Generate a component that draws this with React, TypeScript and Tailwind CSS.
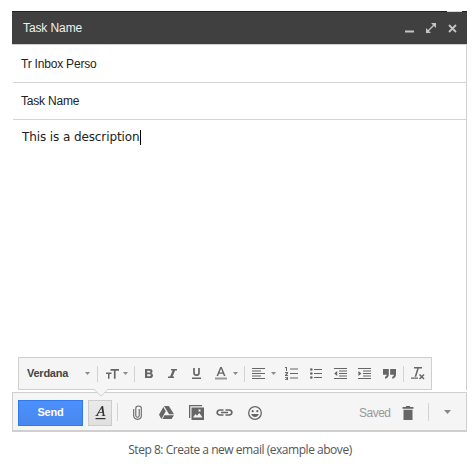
import type { ReactNode } from 'react';

type IconProps = { w: number; h: number; className?: string; label?: string; children: ReactNode };

function Icon({ w, h, className = '', label, children }: IconProps) {
  return (
    <svg width={w} height={h} viewBox={`0 0 ${w} ${h}`} className={`block shrink-0 ${className}`} fill="currentColor" aria-label={label}>
      {children}
    </svg>
  );
}

function Caret({ className = '' }: { className?: string }) {
  return (
    <Icon w={5} h={3} className={`text-[#8a8a8a] ${className}`}>
      <path d="M0 0h5L2.5 3z" />
    </Icon>
  );
}

function Divider({ className = '' }: { className?: string }) {
  return <div className={`w-px shrink-0 bg-[#d3d3d3] ${className}`} />;
}

function TitleBar() {
  return (
    <header className="relative flex h-[33px] items-center border-t border-[#202020] bg-[#404040] pl-[10px] text-[#c4c4c4]">
      <div className="absolute right-[5px] top-[-1px] h-px w-[15px] bg-[#d8d8d8]" />
      <h1 className="w-[372px] pl-px text-[12px] tracking-[-0.1px] text-[#f0f0f0]">Task Name</h1>
      <Icon w={9} h={9} className="ml-[11px]" label="Minimize">
        <path d="M0 6.500h9v2H0z" />
      </Icon>
      <Icon w={10} h={10} className="ml-3" label="Full screen">
        <path d="M5 0h5v5zM0 5l5 5H0z" />
        <path d="M2 8l6-6" fill="none" stroke="currentColor" strokeWidth="1.300" />
      </Icon>
      <Icon w={9} h={9} className="ml-[12px]" label="Close">
        <path d="M1 1l7 7M8 1L1 8" fill="none" stroke="currentColor" strokeWidth="1.8" />
      </Icon>
    </header>
  );
}

function FormatToolbar() {
  return (
    <div className="ml-[6px] flex h-[33px] w-[414px] items-center border border-[#cfcfcf] bg-[#f5f5f5] pl-2 text-[#666]">
      <span className="w-[58px] shrink-0 text-[11px] font-bold leading-none tracking-[-0.25px] text-[#444]">Verdana</span>
      <Caret />
      <Divider className="ml-[7px] h-4" />
      <Icon w={13} h={11} className="ml-2" label="Size">
        <path d="M4.5 1H13v1.700H9.600v8H7.900V2.700H4.500zM0 4.500h5.500V6H3.500v4.700H2V6H0z" />
      </Icon>
      <Caret className="ml-1" />
      <Divider className="ml-[6px] h-4" />
      <Icon w={8} h={9} className="ml-[10px]" label="Bold">
        <path fillRule="evenodd" d="M0 0h4.5C6.500 0 7.500 .9 7.500 2.300c0 .9-.5 1.600-1.200 1.900C7.300 4.500 8 5.300 8 6.400 8 8 6.800 9 4.800 9H0zM2.200 1.700v1.900h1.900c.8 0 1.200-.3 1.200-.9s-.4-1-1.200-1zM2.200 5.200v2.100h2.200c.8 0 1.300-.4 1.300-1.100s-.5-1-1.300-1z" />
      </Icon>
      <Icon w={9} h={9} className="ml-[15px]" label="Italic">
        <path d="M3 0h6v1.500H7.100L4.600 7.500H6V9H0V7.500h2.100l2.500-6H3z" />
      </Icon>
      <Icon w={9} h={11} className="ml-[15px]" label="Underline">
        <path d="M2 0v4.800c0 1.600.8 2.400 2.500 2.400S7 6.400 7 4.800V0" fill="none" stroke="currentColor" strokeWidth="1.7" />
        <path d="M0 9.500h9V11H0z" />
      </Icon>
      <Icon w={12} h={13} className="ml-[14px]" label="Text color">
        <path fillRule="evenodd" d="M5.200 0h1.600L10.500 9H8.900L8 6.700H4L3.100 9H1.500zM6 1.700L4.500 5.400h3z" />
        <path d="M0 10.500h12v2H0z" fill="#999" />
      </Icon>
      <Caret className="ml-[6px]" />
      <Divider className="ml-[6px] h-4" />
      <Icon w={13} h={11} className="ml-[7px]" label="Align">
        <path d="M0 0h13v1H0zM0 2.500h9v1H0zM0 5h13v1H0zM0 7.500h9v1H0zM0 10h13v1H0z" />
      </Icon>
      <Caret className="ml-[6px]" />
      <Icon w={13} h={13} className="ml-[9px]" label="Numbered list">
        <path d="M5 1.500h8v1H5zM5 6h8v1H5zM5 10.500h8v1H5zM0 0h2v4H1V1H0zM0 5h3v1.500L1.500 8H3v1H0V8l1.700-2H0zM0 10h3v3H0v-.8h2v-.4H1v-.7h1v-.3H0z" />
      </Icon>
      <Icon w={12} h={11} className="ml-3" label="Bulleted list">
        <path d="M4 1h8v1H4zM4 5h8v1H4zM4 9h8v1H4z" />
        <circle cx="1.300" cy="1.500" r="1.300" /><circle cx="1.300" cy="5.500" r="1.300" /><circle cx="1.300" cy="9.500" r="1.300" />
      </Icon>
      <Icon w={13} h={11} className="ml-3" label="Indent less">
        <path d="M0 0h13v1H0zM5 2.500h8v1H5zM5 5h8v1H5zM5 7.500h8v1H5zM0 10h13v1H0zM3.200 3v5L.2 5.500z" />
      </Icon>
      <Icon w={13} h={11} className="ml-[11px]" label="Indent more">
        <path d="M0 0h13v1H0zM5 2.500h8v1H5zM5 5h8v1H5zM5 7.500h8v1H5zM0 10h13v1H0zM.4 3v5l3-2.500z" />
      </Icon>
      <Icon w={13} h={10} className="ml-[12px]" label="Quote">
        <path d="M0 0h5.800v5.200C5.800 7.800 4.500 9.300 2 9.700V7.800c1.100-.3 1.600-.9 1.700-2H0zM7.200 0H13v5.200c0 2.600-1.300 4.100-3.800 4.500V7.800c1.100-.3 1.600-.9 1.700-2H7.200z" />
      </Icon>
      <Divider className="ml-[7px] h-4" />
      <Icon w={14} h={13} className="ml-[7px]" label="Remove formatting">
        <path d="M3 0h8v1.500H7.800L5.200 9.800H3.600l2.600-8.300H3zM0 10.500h7v1.200H0z" />
        <path d="M8.500 7.500l4.500 4.500M13 7.500L8.500 12" fill="none" stroke="currentColor" strokeWidth="1.500" />
      </Icon>
    </div>
  );
}

function ActionBar() {
  return (
    <footer className="relative mt-[2px] flex h-[40px] items-center border border-b-2 border-[#cfcfcf] bg-[#f5f5f5] pl-[5px] text-[#666]">
      <Icon w={16} h={9} className="absolute left-[80px] top-[-4px]">
        <path d="M1 0h14L8 7z" fill="#f5f5f5" />
        <path d="M1 .5l7 6.500 7-6.500" fill="none" stroke="#cfcfcf" />
      </Icon>
      <button className="relative top-px h-[26px] w-[65px] shrink-0 border border-[#3079ed] bg-gradient-to-b from-[#4d90fe] to-[#4787ed] text-[11px] font-bold leading-none tracking-[-0.2px] text-white">Send</button>
      <button aria-label="Formatting options" className="relative top-px ml-[5px] flex h-[26px] w-6 shrink-0 items-center justify-center border border-[#ccc] bg-gradient-to-b from-[#eaeaea] to-[#e0e0e0] text-[#333]">
        <Icon w={11} h={14}>
          <path fillRule="evenodd" d="M6.800 0h1.300l1.300 9.200 1 .3v.5H6.700v-.5l1.100-.3-.3-2.500H4L2.600 9.200l1 .3v.5H.3v-.5l1-.3zM6.500 2.200L4.300 6h2.800z" />
          <path d="M.5 12h10v1.200H.5z" />
        </Icon>
      </button>
      <Divider className="ml-[5px] h-[18px]" />
      <div className="relative top-px flex items-center">
        <Icon w={9} h={15} className="ml-[15px]" label="Attach">
          <path d="M6.200 4v6.500c0 2.300-3.400 2.300-3.400 0V3.300C2.800.2 8.300.2 8.300 3.300v7.500c0 4.700-7.600 4.700-7.600 0V4" fill="none" stroke="currentColor" strokeWidth="1.100" />
        </Icon>
        <Icon w={15} h={13} className="ml-[17px]" label="Drive">
          <path d="M5 0h4.800L15 8.300h-4.900zM4.300 1.100l2.500 4.200L2.400 13 0 8.700zM5.500 9.300H15L12.600 13H3.400z" />
        </Icon>
        <Icon w={15} h={15} className="ml-[15px]" label="Photo">
          <path d="M0 0h13v1.300H1.300V13H0z" />
          <path fillRule="evenodd" d="M2.500 2.500H15V15H2.500zM4 12.500h9.500L10.300 8 8 10.800 6.500 9zM9.500 4.500v2h2v-2z" />
        </Icon>
        <Icon w={17} h={7} className="ml-[12px]" label="Link">
          <path d="M7.500 1H4C.2 1 .2 6 4 6h3.500M9.500 1H13c3.800 0 3.800 5 0 5H9.500M5 3.500h7" fill="none" stroke="currentColor" strokeWidth="1.700" />
        </Icon>
        <Icon w={14} h={14} className="ml-[15px]" label="Emoticon">
          <circle cx="7" cy="7" r="6.300" fill="none" stroke="currentColor" strokeWidth="1.300" />
          <circle cx="4.700" cy="5.200" r="1.100" /><circle cx="9.300" cy="5.200" r="1.100" />
          <path d="M3.200 8h7.600c-.6 2-1.900 3-3.800 3S3.800 10 3.200 8z" />
        </Icon>
        <span className="ml-[97px] w-[34px] shrink-0 text-[12px] leading-none tracking-[-0.5px] text-[#999]">Saved</span>
        <Icon w={12} h={14} className="ml-[9px]" label="Discard">
          <path d="M4 0h4v1h3.500v1.800H.5V1H4zM1.500 3.800h9V14h-9z" />
        </Icon>
      </div>
      <Divider className="ml-[14px] h-[18px]" />
      <Icon w={7} h={4} className="ml-[15px] text-[#888]" label="More">
        <path d="M0 0h7L3.500 4z" />
      </Icon>
    </footer>
  );
}

export default function App() {
  return (
    <main className="h-[464px] w-[473px] bg-white pt-[11px] font-['Liberation_Sans',Arial,sans-serif]">
      <section className="ml-3 flex h-[421px] w-[455px] flex-col">
        <TitleBar />
        <div className="flex grow flex-col border-r border-t border-[#cfcfcf] text-[12px] text-[#222]">
          <div className="ml-px flex h-[38px] items-center border-b border-[#d4d4d4] pl-2 tracking-[-0.2px]">Tr Inbox Perso</div>
          <div className="ml-px flex h-[37px] items-center border-b border-[#d4d4d4] pl-2 tracking-[-0.2px]">Task Name</div>
          <div className="grow pl-[10px] pt-[8px]">
            <span className="inline-block h-[15px] whitespace-nowrap border-r border-black font-['DejaVu_Sans',Verdana,sans-serif] text-[12px] leading-[15px] tracking-[-0.1px]">This is a description</span>
          </div>
          <FormatToolbar />
        </div>
        <ActionBar />
      </section>
      <p className="mt-[9px] pl-[7px] text-center font-['Open_Sans',sans-serif] text-[12px] leading-[18px] tracking-[-0.47px] text-[#555]">Step 8: Create a new email (example above)</p>
    </main>
  );
}
